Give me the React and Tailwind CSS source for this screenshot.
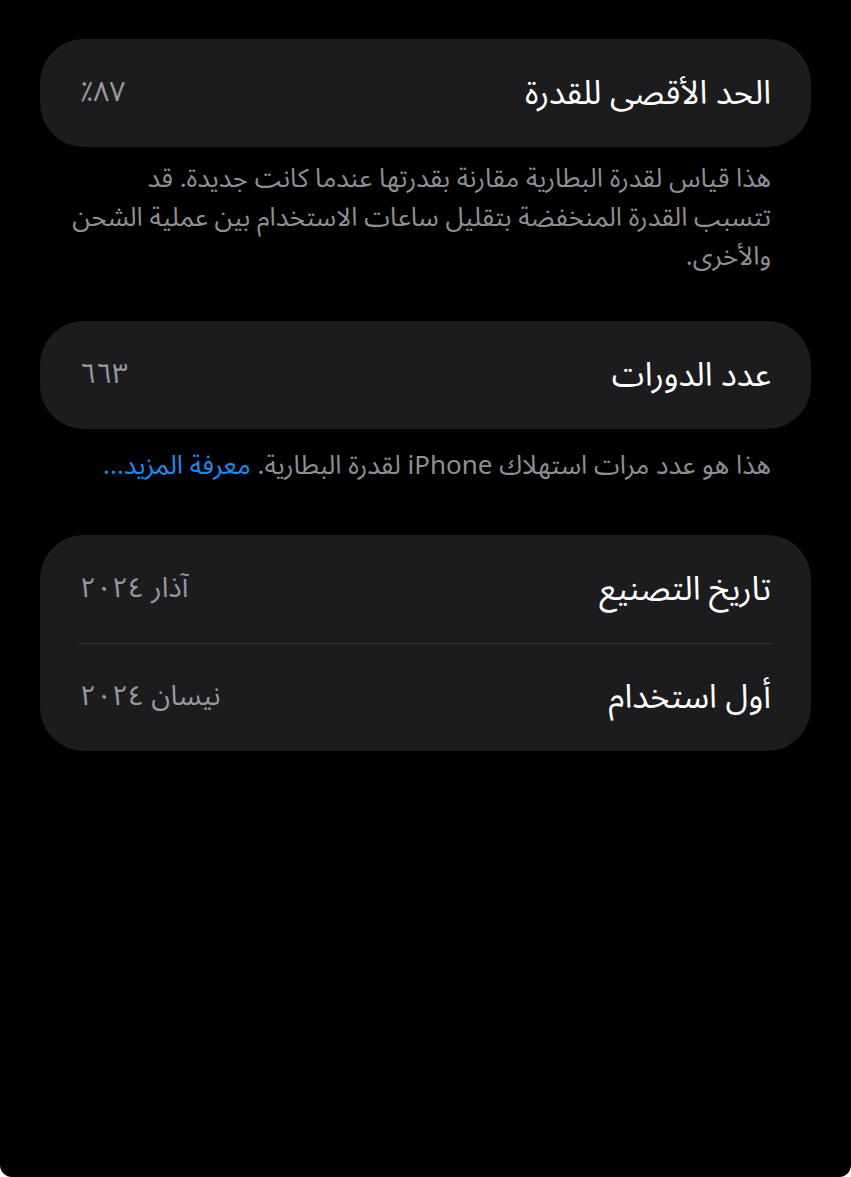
import React from "react";

const font = { fontFamily: '"Noto Sans Arabic", "Noto Sans", "DejaVu Sans", sans-serif' };

function Row({ title, value }) {
  return (
    <div className="flex h-[108px] items-center justify-between px-[40px]">
      <span className="text-[33px] leading-none text-white">{title}</span>
      <span className="text-[28px] leading-none text-[#98989f]">{value}</span>
    </div>
  );
}

export default function App() {
  return (
    <div className="bg-white">
      <div
        dir="rtl"
        style={font}
        className="h-[1177px] w-full overflow-hidden rounded-b-[12px] bg-black px-[40px] pt-[39px]"
      >
        <div className="rounded-[44px] bg-[#1c1c1e]">
          <Row title="الحد الأقصى للقدرة" value="٨٧٪" />
        </div>
        <p className="mt-[12px] pr-[40px] pl-[26px] text-[26px] leading-[39px] text-[#8e8e93]">
          هذا قياس لقدرة البطارية مقارنة بقدرتها عندما كانت جديدة. قد تتسبب القدرة المنخفضة بتقليل ساعات الاستخدام بين عملية الشحن والأخرى.
        </p>
        <div className="mt-[45px] rounded-[44px] bg-[#1c1c1e]">
          <Row title="عدد الدورات" value="٦٦٣" />
        </div>
        <p className="mt-[17px] pr-[40px] pl-[26px] text-[26px] leading-[39px] text-[#8e8e93]">
          هذا هو عدد مرات استهلاك iPhone لقدرة البطارية.{" "}
          <span className="text-[#1a8cf0]">معرفة المزيد...</span>
        </p>
        <div className="mt-[50px] rounded-[44px] bg-[#1c1c1e]">
          <Row title="تاريخ التصنيع" value="آذار ٢٠٢٤" />
          <div className="mx-[39px] h-px bg-[#38383a]" />
          <div className="-mt-px">
            <Row title="أول استخدام" value="نيسان ٢٠٢٤" />
          </div>
        </div>
      </div>
    </div>
  );
}
